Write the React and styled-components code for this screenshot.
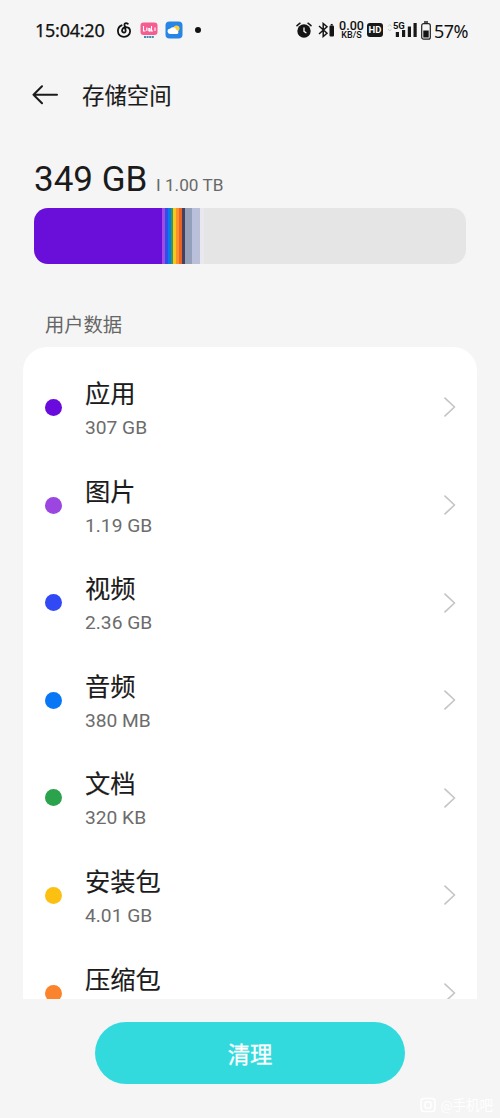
import React from "react";
import styled, { createGlobalStyle } from "styled-components";

const GlobalStyle = createGlobalStyle`
  * { box-sizing: border-box; }
  body {
    margin: 0;
    background: #f5f5f5;
    font-family: Roboto, "Noto Sans CJK SC", sans-serif;
    color: #1b1b1b;
  }
`;

const Screen = styled.div`
  position: relative;
  width: 500px;
  height: 1118px;
  overflow: hidden;
  display: flex;
  flex-direction: column;
  white-space: nowrap;
`;

const StatusBar = styled.header`
  height: 60px;
  flex: none;
  display: flex;
  align-items: center;
  justify-content: space-between;
  padding: 0 32px 0 35px;
  color: #111;
`;

const StatusGroup = styled.div`
  display: flex;
  align-items: center;
`;

const Clock = styled.span`
  width: 70px;
  margin-right: 12px;
  font: 400 18px/24px "Noto Sans", sans-serif;
  letter-spacing: -0.25px;
  -webkit-text-stroke: 0.25px currentColor;
`;

const StatusIcon = styled.svg`
  display: block;
  flex: none;
  margin-left: ${(p) => p.$gap || 0}px;
`;

const Speed = styled.div`
  width: 25px;
  margin-left: 4px;
  display: flex;
  flex-direction: column;
  align-items: center;
`;

const SpeedValue = styled.span`
  font: 500 12.5px/11px Roboto, sans-serif;
`;

const SpeedUnit = styled.span`
  font: 500 9px/9px Roboto, sans-serif;
`;

const Percent = styled.span`
  width: 34px;
  margin-left: 3px;
  padding-top: 1px;
  font: 400 18px/24px "Noto Sans", sans-serif;
  letter-spacing: -0.6px;
`;

const TitleBar = styled.div`
  height: 70px;
  flex: none;
  display: flex;
  align-items: center;
  padding-left: 32px;
`;

const Title = styled.h1`
  margin: 0 0 0 24px;
  padding-top: 2px;
  font-size: 22.4px;
  line-height: 32px;
  font-weight: 400;
  -webkit-text-stroke: 0.15px currentColor;
`;

const Usage = styled.section`
  flex: none;
  padding: 29px 34px 0;
`;

const UsageText = styled.div`
  height: 49px;
  display: flex;
  align-items: baseline;
`;

const Used = styled.strong`
  width: 122px;
  font-weight: 400;
  font-size: 35px;
  line-height: 42px;
`;

const Total = styled.span`
  font-size: 17.2px;
  color: #686868;
`;

const UsageBar = styled.div`
  height: 56px;
  display: flex;
  border-radius: 14px;
  overflow: hidden;
  background: #e5e5e5;
`;

const Segment = styled.div`
  flex: none;
  width: ${(p) => p.$width}px;
  background: ${(p) => p.$color};
`;

const SectionLabel = styled.h2`
  flex: none;
  margin: 47px 0 8px 45px;
  padding-top: 1px;
  font-size: 19.3px;
  line-height: 27px;
  font-weight: 400;
  color: #666;
`;

const Card = styled.ul`
  flex: none;
  height: 652px;
  margin: 0 23px;
  padding: 11.7px 0 0;
  list-style: none;
  overflow: hidden;
  background: #fff;
  border-radius: 24px 24px 0 0;
`;

const Row = styled.li`
  height: 97.6px;
  display: flex;
  align-items: center;
  padding: 0 21px 0 22px;
`;

const Dot = styled.span`
  width: 17px;
  height: 17px;
  border-radius: 50%;
  background: ${(p) => p.$color};
`;

const RowText = styled.div`
  flex: 1;
  margin-left: 23px;
  padding-top: 5px;
`;

const Name = styled.div`
  font-size: 25.3px;
  line-height: 36px;
  -webkit-text-stroke: 0.15px currentColor;
`;

const Size = styled.div`
  font-size: 19.2px;
  line-height: 30px;
  color: #6c6c6c;
`;

const Footer = styled.footer`
  flex: none;
  display: flex;
  justify-content: center;
  padding-top: 23px;
`;

const CleanButton = styled.button`
  width: 310px;
  height: 62px;
  border: 0;
  border-radius: 31px;
  padding: 4px 0 0;
  background: #33dadd;
  color: #fff;
  font: 400 22.3px/32px Roboto, "Noto Sans CJK SC", sans-serif;
  -webkit-text-stroke: 0.3px currentColor;
`;

const Watermark = styled.div`
  position: absolute;
  right: 7px;
  bottom: 3px;
  display: flex;
  align-items: center;
  gap: 4px;
  color: #fff;
  font-size: 13.5px;
  line-height: 20px;
`;

const segments = [
  [128, "#6a0fda"],
  [3, "#a04be5"],
  [3, "#334de9"],
  [3, "#087aee"],
  [2, "#349b55"],
  [3, "#fbc51c"],
  [3, "#fa922c"],
  [3, "#ed6225"],
  [3, "#45405c"],
  [7, "#94a0ba"],
  [8, "#bac0d9"],
  [4, "#e8e8ee"],
];

const rows = [
  ["应用", "307 GB", "#6a0bdd"],
  ["图片", "1.19 GB", "#9c46e1"],
  ["视频", "2.36 GB", "#3049f4"],
  ["音频", "380 MB", "#0877f6"],
  ["文档", "320 KB", "#2ba24c"],
  ["安装包", "4.01 GB", "#fcc013"],
  ["压缩包", "", "#fb832c"],
];

const Music = () => (
  <StatusIcon width="14" height="16" viewBox="0 0 14 16" fill="none" stroke="#111" strokeWidth="1.8" strokeLinecap="round">
    <path d="M10.800 1.800C9 .6 7.200 1.400 7.500 3l1.100 5.200c.3 1.400-.5 2.400-1.600 2.400-1.200 0-2-1-1.900-2.200.1-2 2-3.400 3.900-3.300 2.500.1 4.100 2 4.100 4.200 0 3.300-2.700 5.500-6.100 5.500C3.600 14.800.9 12.500.9 9.100c0-2.800 1.500-4.900 3.700-5.800" />
  </StatusIcon>
);

const VideoApp = () => (
  <StatusIcon $gap={9} width="18" height="17" viewBox="0 0 18 17">
    <rect x=".5" y=".5" width="17" height="12.500" rx="3" fill="#f55c91" />
    <path d="M3.500 4v5h2M6.800 5.500V9M8.200 7.500c0-1.200 2-1.200 2 0V9c-2 .5-2-1.500 0-1.200M11.500 4v5h1.500M15 5.500V9" fill="none" stroke="#fff" strokeWidth="1.100" />
    <path d="M4 15h10" stroke="#418ca9" strokeWidth="1.800" strokeDasharray="2 .6" />
  </StatusIcon>
);

const Weather = () => (
  <StatusIcon $gap={7} width="18" height="18" viewBox="0 0 18 18">
    <rect x=".5" y=".5" width="17" height="17" rx="4" fill="#2785e5" />
    <circle cx="11.500" cy="7.500" r="3" fill="#ffce3d" />
    <path d="M5.300 13a2.600 2.600 0 0 1-.3-5.200A3.500 3.500 0 0 1 11.400 9a2.100 2.100 0 0 1 .8 4z" fill="#fff" />
  </StatusIcon>
);

const Alarm = () => (
  <StatusIcon width="16" height="17" viewBox="0 0 16 17" fill="none" stroke="#151515" strokeLinecap="round">
    <circle cx="8" cy="9" r="6.700" fill="#151515" stroke="none" />
    <path d="m1 3.700 3-2.500M15 3.700l-3-2.500" strokeWidth="1.500" />
    <path d="M8 6v3.300l2 1.400" stroke="#f5f5f5" strokeWidth="1.300" />
  </StatusIcon>
);

const Bluetooth = () => (
  <StatusIcon $gap={6} width="17" height="16" viewBox="0 0 17 16" fill="none" stroke="#151515" strokeWidth="1.500">
    <path d="m1 4 8 7.300L5.200 14.500v-13L9 4.700 1 12" />
    <rect x="11.500" y="3.500" width="4.500" height="11" rx="1" fill="#151515" stroke="none" />
    <path d="M12.700 2.700h2" />
  </StatusIcon>
);

const HDBadge = styled.span`
  width: 16px;
  height: 14px;
  margin-left: 3px;
  border-radius: 3px;
  background: #181818;
  color: #fff;
  text-align: center;
  font: 700 9.5px/14px Roboto, sans-serif;
`;

const Signal = styled.div`
  width: 30px;
  height: 18px;
  margin-left: 4px;
  display: grid;
`;

const SignalBars = styled.svg`
  grid-area: 1 / 1;
`;

const Network = styled.span`
  grid-area: 1 / 1;
  margin-left: 6px;
  font: 700 9.5px/10px Roboto, sans-serif;
  letter-spacing: -0.3px;
`;

const Battery = () => (
  <StatusIcon $gap={4} width="10" height="19" viewBox="0 0 10 19" fill="none" stroke="#222">
    <path d="M3 1h4" strokeWidth="1.500" />
    <rect x=".7" y="2.700" width="8.600" height="15.500" rx="2" strokeWidth="1.200" />
    <path d="M2.300 9.500h5.400v7H2.300z" fill="#151515" stroke="none" />
  </StatusIcon>
);

const BackArrow = () => (
  <StatusIcon width="26" height="20" viewBox="0 0 26 20" fill="none" stroke="#1b1b1b" strokeWidth="2" strokeLinecap="round" strokeLinejoin="round">
    <path d="M25 9.800H1.500M10 1.300 1.500 9.800l8.500 8.500" />
  </StatusIcon>
);

const Chevron = () => (
  <StatusIcon width="13" height="20" viewBox="0 0 13 20" fill="none" stroke="#c5c5c5" strokeWidth="1.700" strokeLinecap="round" strokeLinejoin="round">
    <path d="m2 1.200 9.500 8.800L2 18.800" />
  </StatusIcon>
);

export default function App() {
  return (
    <Screen>
      <GlobalStyle />
      <StatusBar>
        <StatusGroup>
          <Clock>15:04:20</Clock>
          <Music />
          <VideoApp />
          <Weather />
          <StatusIcon $gap={12} width="6" height="6" viewBox="0 0 6 6">
            <circle cx="3" cy="3" r="3" fill="#111" />
          </StatusIcon>
        </StatusGroup>
        <StatusGroup>
          <Alarm />
          <Bluetooth />
          <Speed>
            <SpeedValue>0.00</SpeedValue>
            <SpeedUnit>KB/S</SpeedUnit>
          </Speed>
          <HDBadge>HD</HDBadge>
          <Signal>
            <SignalBars width="30" height="18" viewBox="0 0 30 18">
              <path d="m1 5.500 1.800-2 1.800 2M1 8l1.800 2 1.800-2" fill="none" stroke="#ccc" />
              <path d="M8.800 11H12v5H8.800zM15 9h3.200v7H15zM20.800 5.500H24V16h-3.200zM26.500 2h3.200v14h-3.200z" fill="#181818" />
            </SignalBars>
            <Network>5G</Network>
          </Signal>
          <Battery />
          <Percent>57%</Percent>
        </StatusGroup>
      </StatusBar>
      <TitleBar>
        <BackArrow />
        <Title>存储空间</Title>
      </TitleBar>
      <Usage>
        <UsageText>
          <Used>349 GB</Used>
          <Total>I 1.00 TB</Total>
        </UsageText>
        <UsageBar>
          {segments.map(([width, color]) => (
            <Segment key={color} $width={width} $color={color} />
          ))}
        </UsageBar>
      </Usage>
      <SectionLabel>用户数据</SectionLabel>
      <Card>
        {rows.map(([name, size, color]) => (
          <Row key={name}>
            <Dot $color={color} />
            <RowText>
              <Name>{name}</Name>
              <Size>{size || "\u00a0"}</Size>
            </RowText>
            <Chevron />
          </Row>
        ))}
      </Card>
      <Footer>
        <CleanButton>清理</CleanButton>
      </Footer>
      <Watermark>
        <svg width="16" height="16" viewBox="0 0 16 16" fill="none" stroke="#fff" strokeWidth="1.500">
          <rect x="1" y="1.500" width="14" height="13" rx="3" />
          <rect x="5" y="5" width="6" height="6" rx="1" />
        </svg>
        <span>@手机吧</span>
      </Watermark>
    </Screen>
  );
}
